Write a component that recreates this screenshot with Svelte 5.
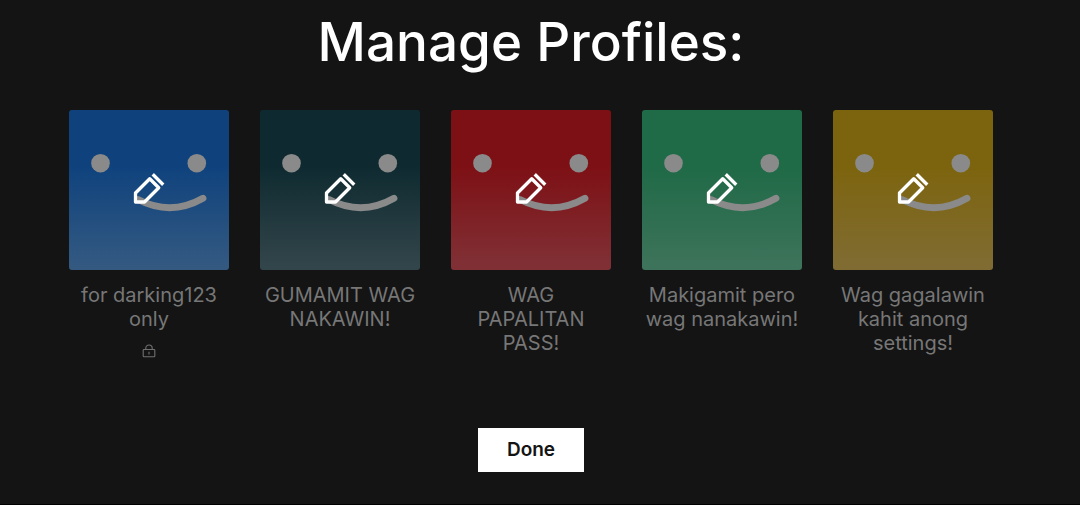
<script>
  const profiles = [
    { name: 'for darking123 only', top: '#0f427d', bottom: '#335981', locked: true },
    { name: 'GUMAMIT WAG NAKAWIN!', top: '#0e2a30', bottom: '#32454a', locked: false },
    { name: 'WAG PAPALITAN PASS!', top: '#7d1015', bottom: '#803035', locked: false },
    { name: 'Makigamit pero wag nanakawin!', top: '#1f6a47', bottom: '#3d735a', locked: false },
    { name: 'Wag gagalawin kahit anong settings!', top: '#7c640e', bottom: '#806c32', locked: false }
  ];
</script>

<main>
  <h1>Manage Profiles:</h1>
  <ul>
    {#each profiles as profile}
      <li>
        <a href="#edit" aria-label={`Edit ${profile.name}`}>
          <svg
            class="avatar"
            viewBox="0 0 160 160"
            aria-hidden="true"
            style={`--top: ${profile.top}; --bottom: ${profile.bottom}`}
          >
            <g fill="#8a8a8a">
              <circle cx="31.5" cy="53.2" r="9.3" />
              <circle cx="127.8" cy="53.2" r="9.3" />
            </g>
            <path d="M69 89.5Q102 106.5 134 88.3" fill="none" stroke="#8a8a8a" stroke-width="6.8" stroke-linecap="round" />
            <g transform="translate(62 62) scale(1.5)" fill="none" stroke="#fff" stroke-width="2.2">
              <path d="M14.5 1.5l7 7" />
              <path d="M3 14v6h6l9.5-9.5-6-6z" stroke-linejoin="round" />
            </g>
          </svg>
          <span class="name">{profile.name}</span>
        </a>
        {#if profile.locked}
          <svg class="lock" viewBox="0 0 14 14" role="img" aria-label="Locked">
            <g fill="none" stroke="#707070" stroke-width="1.1">
              <rect x="1.2" y="5.5" width="11.6" height="7.3" rx="0.8" />
              <path d="M3.8 5.5V4.2a3.2 3.2 0 0 1 6.4 0v1.3M7 7.8v2.8" />
            </g>
          </svg>
        {/if}
      </li>
    {/each}
  </ul>
  <button type="button">Done</button>
</main>

<style>
  :global(body) {
    margin: 0;
    background: #141414;
  }
  main {
    box-sizing: border-box;
    min-height: 100vh;
    display: flex;
    flex-direction: column;
    align-items: center;
    padding: 10px 18px 32px 0;
    border-bottom: 1px solid #000;
    font-family: Inter, 'Liberation Sans', sans-serif;
    color: #fff;
  }
  h1 {
    margin: 0 0 36px;
    font-size: 53px;
    line-height: 64px;
    font-weight: 500;
  }
  ul {
    box-sizing: border-box;
    list-style: none;
    margin: 0;
    padding: 0;
    width: 87%;
    display: grid;
    grid-template-columns: repeat(5, 1fr);
    gap: 31px;
  }
  li {
    display: flex;
    flex-direction: column;
    align-items: center;
    min-width: 0;
  }
  a {
    display: block;
    width: 100%;
    color: #777;
    text-decoration: none;
    text-align: center;
  }
  .avatar {
    display: block;
    width: 100%;
    border-radius: 3px;
    background: linear-gradient(var(--top) 35%, var(--bottom) 97%);
  }
  .name {
    display: block;
    margin-top: 13px;
    padding: 0 2px;
    font-size: 20px;
    line-height: 24px;
  }
  .lock {
    width: 14px;
    height: 14px;
    margin-top: 13px;
  }
  button {
    margin-top: 70px;
    padding: 0 29px;
    height: 44px;
    border: 0;
    background: #fff;
    color: #141414;
    font: 600 19px/44px Inter, 'Liberation Sans', sans-serif;
  }
</style>
